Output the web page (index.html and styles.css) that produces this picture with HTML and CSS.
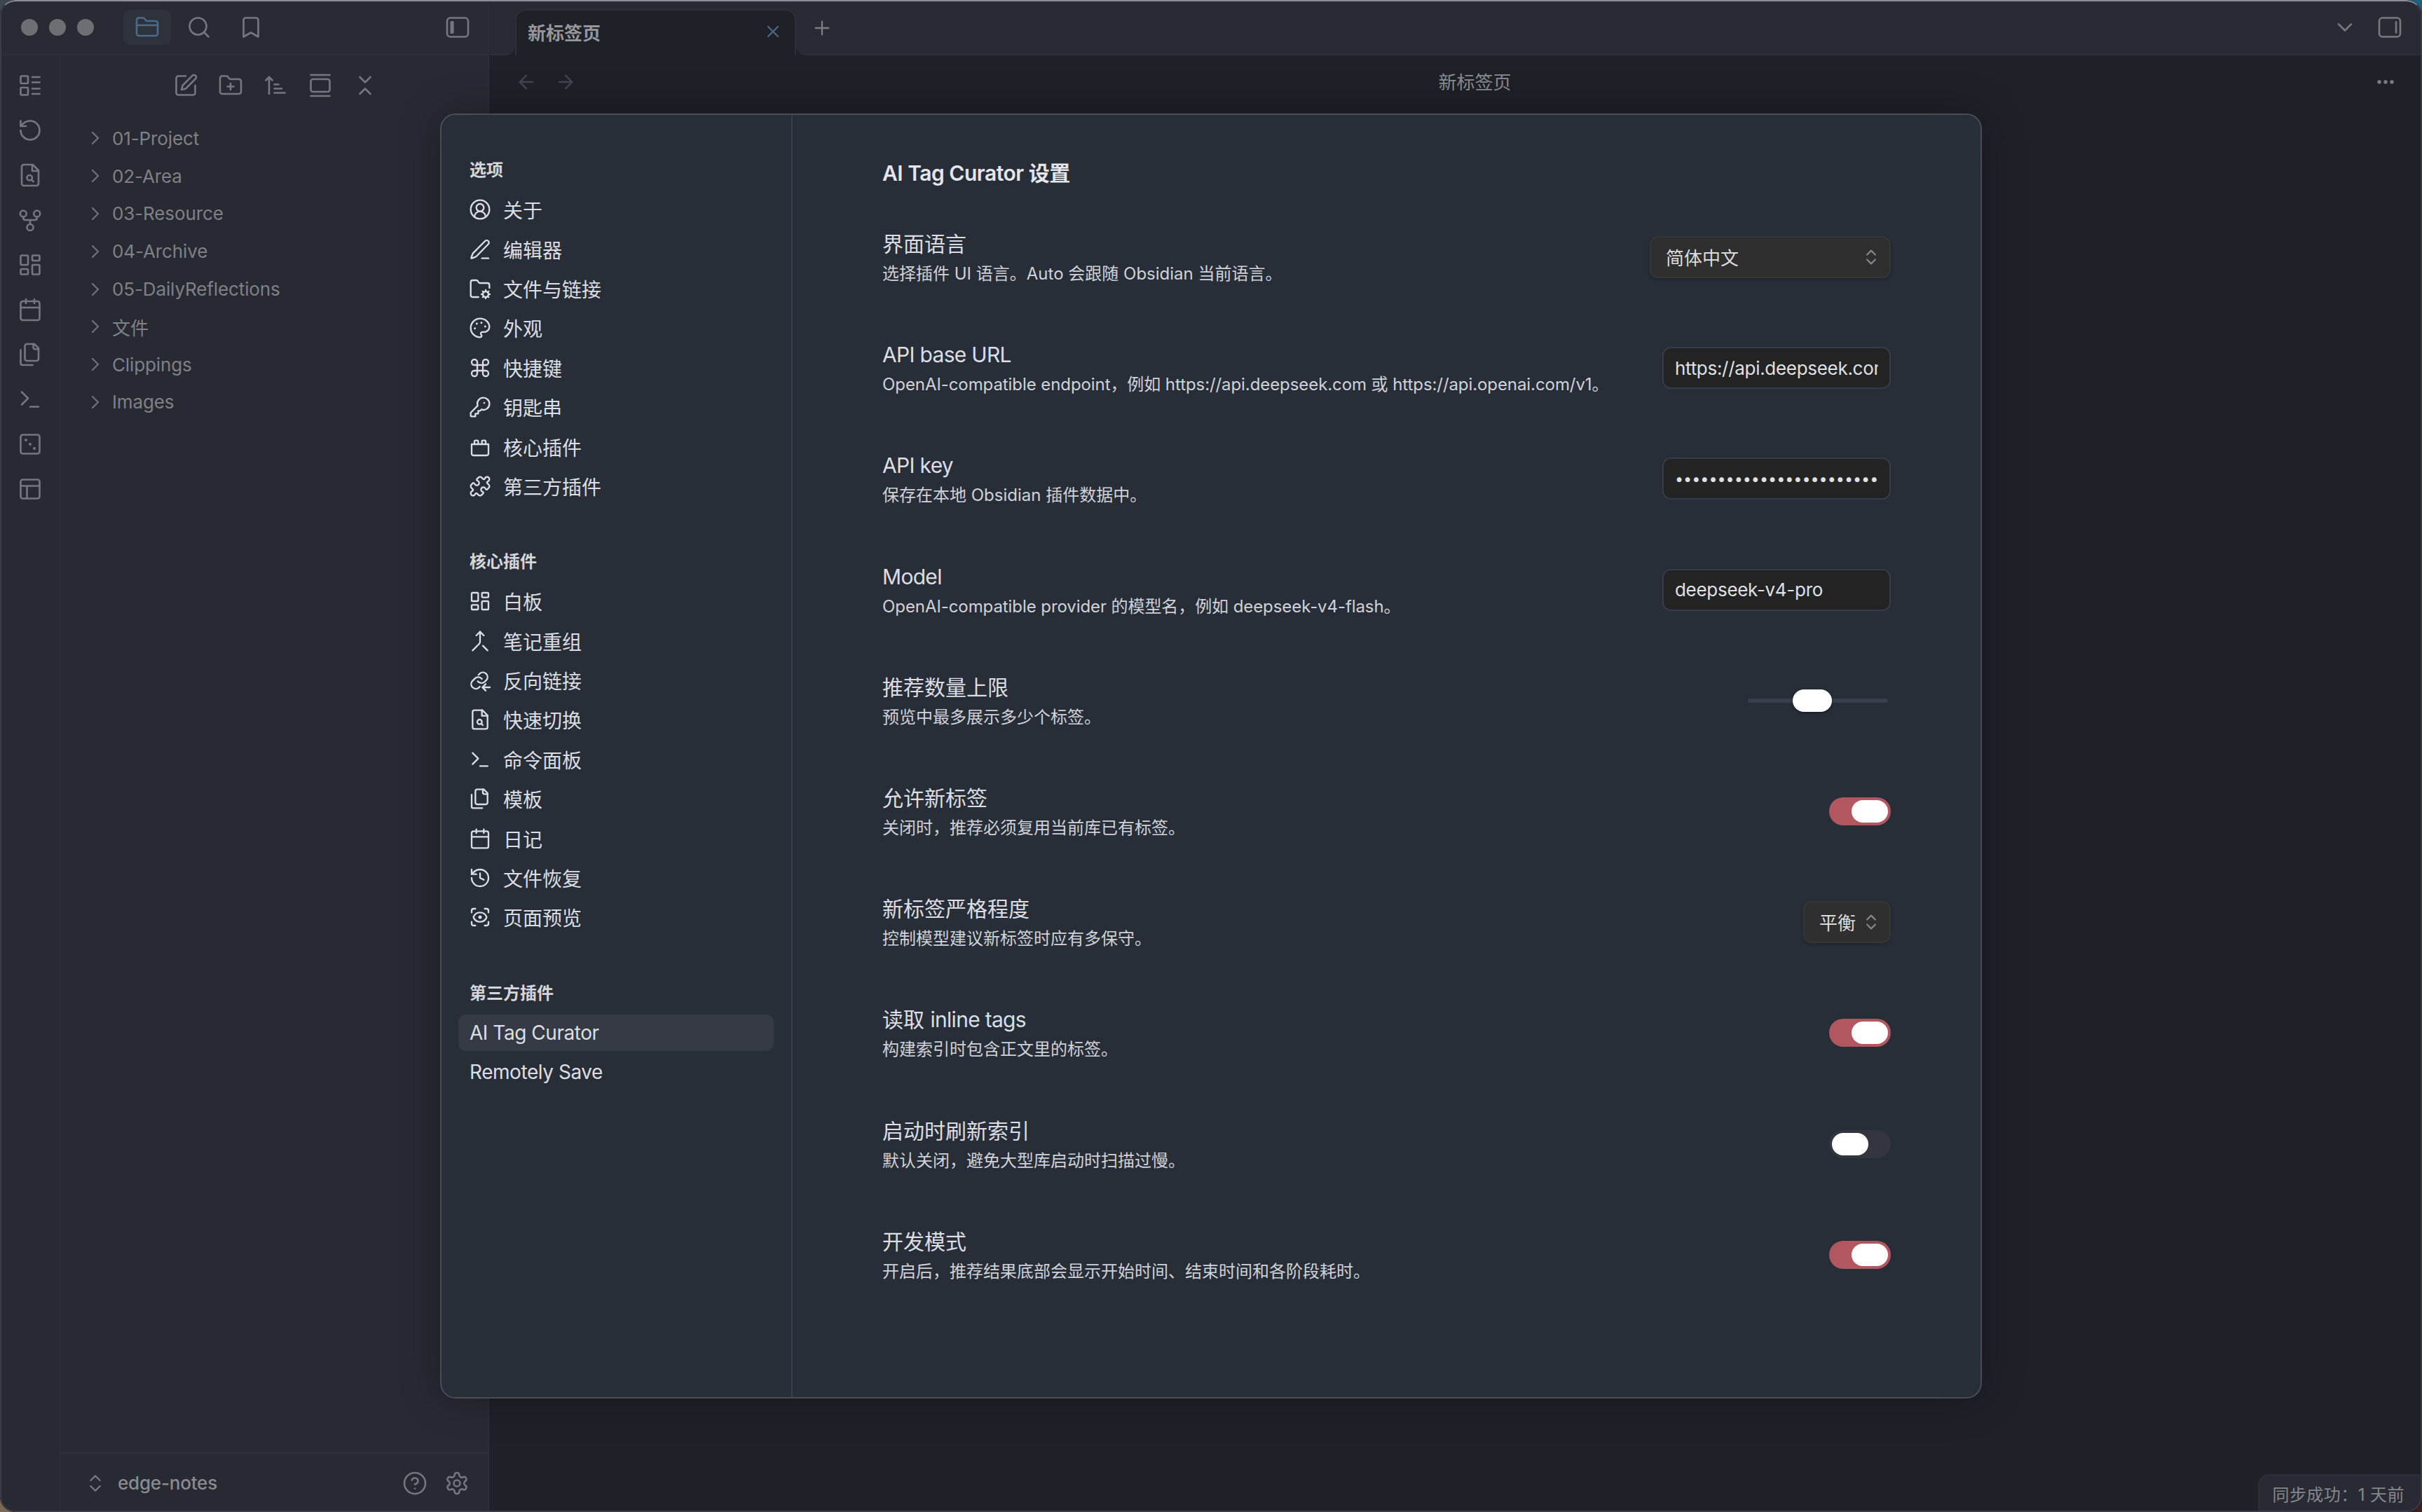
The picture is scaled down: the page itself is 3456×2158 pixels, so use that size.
FILE: index.html
```html
<!DOCTYPE html>
<html lang="zh-CN">
<head>
<meta charset="utf-8">
<title>AI Tag Curator 设置</title>
<link rel="stylesheet" href="styles.css">
</head>
<body>
<svg class="sprite" aria-hidden="true">
  <symbol id="i-folder-closed" viewBox="0 0 24 24"><path d="M20 20a2 2 0 0 0 2-2V8a2 2 0 0 0-2-2h-7.9a2 2 0 0 1-1.69-.9L9.6 3.9A2 2 0 0 0 7.93 3H4a2 2 0 0 0-2 2v13a2 2 0 0 0 2 2Z"/><path d="M2 10h20"/></symbol>
  <symbol id="i-search" viewBox="0 0 24 24"><circle cx="11" cy="11" r="8"/><path d="m21 21-4.3-4.3"/></symbol>
  <symbol id="i-bookmark" viewBox="0 0 24 24"><path d="m19 21-7-4-7 4V5a2 2 0 0 1 2-2h10a2 2 0 0 1 2 2v16z"/></symbol>
  <symbol id="i-side-left" viewBox="0 0 24 24"><rect x="2" y="3" width="20" height="18" rx="3"/><rect class="solid" x="5" y="6" width="3.4" height="12" rx="1"/></symbol>
  <symbol id="i-side-right" viewBox="0 0 24 24"><rect x="2" y="3" width="20" height="18" rx="3"/><path d="M18 7v10"/></symbol>
  <symbol id="i-layout-list" viewBox="0 0 24 24"><rect x="3" y="3" width="7" height="7" rx="1"/><rect x="3" y="14" width="7" height="7" rx="1"/><path d="M14 4h7M14 9h7M14 15h7M14 20h7"/></symbol>
  <symbol id="i-rotate" viewBox="0 0 24 24"><path d="M3 12a9 9 0 1 0 9-9 9.75 9.75 0 0 0-6.74 2.74L3 8"/><path d="M3 3v5h5"/></symbol>
  <symbol id="i-file-search" viewBox="0 0 24 24"><path d="M14.5 2H6a2 2 0 0 0-2 2v16a2 2 0 0 0 2 2h12a2 2 0 0 0 2-2V7.5L14.5 2z"/><path d="M14 2v6h6"/><circle cx="11.5" cy="14.5" r="2.5"/><path d="M13.3 16.3 15 18"/></symbol>
  <symbol id="i-fork" viewBox="0 0 24 24"><circle cx="12" cy="19" r="3"/><circle cx="5.5" cy="6" r="3"/><circle cx="18.5" cy="6" r="3"/><path d="M18.5 9v1c0 1.2-.8 2-2 2h-9c-1.200 0-2-.8-2-2V9"/><path d="M12 12v4"/></symbol>
  <symbol id="i-dashboard" viewBox="0 0 24 24"><rect x="3" y="3" width="7" height="9" rx="1"/><rect x="14" y="3" width="7" height="5" rx="1"/><rect x="14" y="12" width="7" height="9" rx="1"/><rect x="3" y="16" width="7" height="5" rx="1"/></symbol>
  <symbol id="i-calendar" viewBox="0 0 24 24"><rect x="3" y="4" width="18" height="18" rx="2"/><path d="M16 2v4M8 2v4M3 10h18"/></symbol>
  <symbol id="i-files" viewBox="0 0 24 24"><path d="M20 7h-3a2 2 0 0 1-2-2V2"/><path d="M9 18a2 2 0 0 1-2-2V4a2 2 0 0 1 2-2h7l4 4v10a2 2 0 0 1-2 2Z"/><path d="M3 7.600v12.800A1.600 1.600 0 0 0 4.600 22h9.800"/></symbol>
  <symbol id="i-terminal" viewBox="0 0 24 24"><path d="m4 17 6-6-6-6"/><path d="M12 19h8"/></symbol>
  <symbol id="i-dice" viewBox="0 0 24 24"><rect x="3" y="3" width="18" height="18" rx="2"/><circle class="solid" cx="8" cy="8" r="1.300"/><circle class="solid" cx="12" cy="12" r="1.300"/><circle class="solid" cx="16" cy="16" r="1.300"/></symbol>
  <symbol id="i-template" viewBox="0 0 24 24"><rect x="3" y="3" width="18" height="18" rx="2"/><path d="M3 9h18M9 21V9"/></symbol>
  <symbol id="i-edit" viewBox="0 0 24 24"><path d="M12 3H5a2 2 0 0 0-2 2v14a2 2 0 0 0 2 2h14a2 2 0 0 0 2-2v-7"/><path d="M18.375 2.625a2.121 2.121 0 1 1 3 3L12 15l-4 1 1-4Z"/></symbol>
  <symbol id="i-folder-plus" viewBox="0 0 24 24"><path d="M20 20a2 2 0 0 0 2-2V8a2 2 0 0 0-2-2h-7.9a2 2 0 0 1-1.69-.9L9.6 3.9A2 2 0 0 0 7.93 3H4a2 2 0 0 0-2 2v13a2 2 0 0 0 2 2Z"/><path d="M12 10v6M9 13h6"/></symbol>
  <symbol id="i-sort" viewBox="0 0 24 24"><path d="M11 11h4M11 15h7M11 19h10M9 7 6 4 3 7M6 6v14"/></symbol>
  <symbol id="i-gallery" viewBox="0 0 24 24"><path d="M3 2h18"/><rect x="3" y="6" width="18" height="12" rx="2"/><path d="M3 22h18"/></symbol>
  <symbol id="i-collapse" viewBox="0 0 24 24"><path d="m7 20 5-5 5 5M7 4l5 5 5-5"/></symbol>
  <symbol id="i-chev-right" viewBox="0 0 24 24"><path d="m9 18 6-6-6-6"/></symbol>
  <symbol id="i-chev-down" viewBox="0 0 24 24"><path d="m6 9 6 6 6-6"/></symbol>
  <symbol id="i-updown" viewBox="0 0 24 24"><path d="m7 15 5 5 5-5M7 9l5-5 5 5"/></symbol>
  <symbol id="i-x" viewBox="0 0 24 24"><path d="M18 6 6 18M6 6l12 12"/></symbol>
  <symbol id="i-plus" viewBox="0 0 24 24"><path d="M5 12h14M12 5v14"/></symbol>
  <symbol id="i-back" viewBox="0 0 24 24"><path d="M19 12H5M12 19l-7-7 7-7"/></symbol>
  <symbol id="i-forward" viewBox="0 0 24 24"><path d="M5 12h14M12 5l7 7-7 7"/></symbol>
  <symbol id="i-more" viewBox="0 0 24 24"><circle class="solid" cx="6" cy="12" r="1.800"/><circle class="solid" cx="12" cy="12" r="1.800"/><circle class="solid" cx="18" cy="12" r="1.800"/></symbol>
  <symbol id="i-help" viewBox="0 0 24 24"><circle cx="12" cy="12" r="10"/><path d="M9.090 9a3 3 0 0 1 5.830 1c0 2-3 3-3 3M12 17h.01"/></symbol>
  <symbol id="i-gear" viewBox="0 0 24 24"><path d="M12.220 2h-.44a2 2 0 0 0-2 2v.18a2 2 0 0 1-1 1.730l-.43.25a2 2 0 0 1-2 0l-.15-.08a2 2 0 0 0-2.730.73l-.22.38a2 2 0 0 0 .73 2.730l.15.1a2 2 0 0 1 1 1.720v.51a2 2 0 0 1-1 1.740l-.15.09a2 2 0 0 0-.73 2.730l.22.38a2 2 0 0 0 2.730.73l.15-.08a2 2 0 0 1 2 0l.43.25a2 2 0 0 1 1 1.730V20a2 2 0 0 0 2 2h.44a2 2 0 0 0 2-2v-.18a2 2 0 0 1 1-1.730l.43-.25a2 2 0 0 1 2 0l.15.08a2 2 0 0 0 2.730-.73l.22-.39a2 2 0 0 0-.73-2.730l-.15-.08a2 2 0 0 1-1-1.740v-.5a2 2 0 0 1 1-1.740l.15-.09a2 2 0 0 0 .73-2.730l-.22-.38a2 2 0 0 0-2.730-.73l-.15.08a2 2 0 0 1-2 0l-.43-.25a2 2 0 0 1-1-1.730V4a2 2 0 0 0-2-2z"/><circle cx="12" cy="12" r="3"/></symbol>
  <symbol id="i-user" viewBox="0 0 24 24"><path d="M18 20a6 6 0 0 0-12 0"/><circle cx="12" cy="10" r="4"/><circle cx="12" cy="12" r="10"/></symbol>
  <symbol id="i-pencil" viewBox="0 0 24 24"><path d="M14 21.500h7"/><path d="M17.400 3a2.100 2.100 0 0 1 3.400 3.400L8 19.500a2 2 0 0 1-.9.500l-3.800 1.400a.5.5 0 0 1-.7-.7l1.400-3.800a2 2 0 0 1 .5-.9z"/></symbol>
  <symbol id="i-folder-cog" viewBox="0 0 24 24"><path d="M10.300 21H4a2 2 0 0 1-2-2V5a2 2 0 0 1 2-2h3.980a2 2 0 0 1 1.690.9l.66 1.200A2 2 0 0 0 12 6h8a2 2 0 0 1 2 2v3.300"/><circle cx="18" cy="18" r="3"/><path d="M18 13.500V15M18 21v1.500M13.500 18H15M21 18h1.500M14.800 14.800l1.100 1.100M20.100 20.100l1.100 1.100M14.800 21.200l1.100-1.100M20.100 15.900l1.100-1.100"/></symbol>
  <symbol id="i-palette" viewBox="0 0 24 24"><circle class="solid" cx="13.500" cy="6.500" r="1.100"/><circle class="solid" cx="17.500" cy="10.500" r="1.100"/><circle class="solid" cx="8.500" cy="7.500" r="1.100"/><circle class="solid" cx="6.500" cy="12.500" r="1.100"/><path d="M12 2C6.500 2 2 6.500 2 12s4.500 10 10 10c.926 0 1.648-.746 1.648-1.688 0-.437-.18-.835-.437-1.125-.29-.289-.438-.652-.438-1.125a1.640 1.640 0 0 1 1.668-1.668h1.996c3.051 0 5.555-2.503 5.555-5.554C21.965 6.012 17.461 2 12 2z"/></symbol>
  <symbol id="i-command" viewBox="0 0 24 24"><path d="M15 6v12a3 3 0 1 0 3-3H6a3 3 0 1 0 3 3V6a3 3 0 1 0-3 3h12a3 3 0 1 0-3-3"/></symbol>
  <symbol id="i-key" viewBox="0 0 24 24"><path d="M2 18v3c0 .6.4 1 1 1h4v-3h3v-3h2l1.400-1.400a6.500 6.500 0 1 0-4-4Z"/><circle class="solid" cx="16.500" cy="7.500" r="1"/></symbol>
  <symbol id="i-lego" viewBox="0 0 24 24"><path d="M3 9h18v10a2 2 0 0 1-2 2H5a2 2 0 0 1-2-2Z"/><path d="M6 9V6a1 1 0 0 1 1-1h2a1 1 0 0 1 1 1v3M14 9V6a1 1 0 0 1 1-1h2a1 1 0 0 1 1 1v3"/></symbol>
  <symbol id="i-puzzle" viewBox="0 0 24 24"><path d="M19.439 7.850c-.049.322.059.648.289.878l1.568 1.568c.47.47.706 1.087.706 1.704s-.235 1.233-.706 1.704l-1.611 1.611a.98.98 0 0 1-.837.276c-.47-.07-.802-.48-.968-.925a2.501 2.501 0 1 0-3.214 3.214c.446.166.855.497.925.968a.979.979 0 0 1-.276.837l-1.610 1.610a2.404 2.404 0 0 1-1.705.707 2.402 2.402 0 0 1-1.704-.706l-1.568-1.568a1.026 1.026 0 0 0-.877-.29c-.493.074-.84.504-1.020.968a2.500 2.500 0 1 1-3.237-3.237c.464-.18.894-.527.967-1.020a1.026 1.026 0 0 0-.289-.877l-1.568-1.568A2.402 2.402 0 0 1 1.998 12c0-.617.236-1.234.706-1.704L4.230 8.770c.24-.24.581-.353.917-.303.515.077.877.528 1.073 1.010a2.500 2.500 0 1 0 3.259-3.259c-.482-.196-.933-.558-1.010-1.073-.05-.336.062-.676.303-.917l1.525-1.525A2.402 2.402 0 0 1 12 1.998c.617 0 1.234.236 1.704.706l1.568 1.568c.23.23.556.338.877.29.493-.074.84-.504 1.020-.968a2.500 2.500 0 1 1 3.237 3.237c-.464.18-.894.527-.967 1.020Z"/></symbol>
  <symbol id="i-merge" viewBox="0 0 24 24"><path d="m8 6 4-4 4 4"/><path d="M12 2v10.300a4 4 0 0 1-1.172 2.872L4 22"/><path d="m20 22-5-5"/></symbol>
  <symbol id="i-backlink" viewBox="0 0 24 24"><path d="M9.500 13a5 5 0 0 0 7.500.5l2-2a5 5 0 0 0-7-7l-1.700 1.700"/><path d="M14 10.500a5 5 0 0 0-7.500-.5l-3 3a5 5 0 0 0 7 7l1.200-1.200"/><path d="M22.500 19.500H14.500M18 16l-3.500 3.500L18 23"/></symbol>
  <symbol id="i-history" viewBox="0 0 24 24"><path d="M3 12a9 9 0 1 0 9-9 9.750 9.750 0 0 0-6.740 2.740L3 8"/><path d="M3 3v5h5"/><path d="M12 7v5l4 2"/></symbol>
  <symbol id="i-scan-eye" viewBox="0 0 24 24"><path d="M3 7V5a2 2 0 0 1 2-2h2M17 3h2a2 2 0 0 1 2 2v2M21 17v2a2 2 0 0 1-2 2h-2M7 21H5a2 2 0 0 1-2-2v-2"/><circle cx="12" cy="12" r="1"/><path d="M18.944 12.330a1 1 0 0 0 0-.66 7.500 7.500 0 0 0-13.888 0 1 1 0 0 0 0 .66 7.500 7.500 0 0 0 13.888 0"/></symbol>
</svg>

<div class="window">
  <div class="left-pane">
    <header class="topbar">
      <div class="traffic"><i></i><i></i><i></i></div>
      <div class="side-tabs">
        <span class="side-tab active"><svg class="ico s36"><use href="#i-folder-closed"/></svg></span>
        <span class="side-tab"><svg class="ico s36"><use href="#i-search"/></svg></span>
        <span class="side-tab"><svg class="ico s36"><use href="#i-bookmark"/></svg></span>
      </div>
      <svg class="ico s36 toggle-left"><use href="#i-side-left"/></svg>
    </header>
    <div class="left-body">
      <nav class="ribbon">
        <span class="rib"><svg class="ico s36"><use href="#i-layout-list"/></svg></span>
        <span class="rib"><svg class="ico s36"><use href="#i-rotate"/></svg></span>
        <span class="rib"><svg class="ico s36"><use href="#i-file-search"/></svg></span>
        <span class="rib"><svg class="ico s36"><use href="#i-fork"/></svg></span>
        <span class="rib"><svg class="ico s36"><use href="#i-dashboard"/></svg></span>
        <span class="rib"><svg class="ico s36"><use href="#i-calendar"/></svg></span>
        <span class="rib"><svg class="ico s36"><use href="#i-files"/></svg></span>
        <span class="rib"><svg class="ico s36"><use href="#i-terminal"/></svg></span>
        <span class="rib"><svg class="ico s36"><use href="#i-dice"/></svg></span>
        <span class="rib"><svg class="ico s36"><use href="#i-template"/></svg></span>
      </nav>
      <aside class="sidebar">
        <div class="tree-tools">
          <span class="rib"><svg class="ico s36"><use href="#i-edit"/></svg></span>
          <span class="rib"><svg class="ico s36"><use href="#i-folder-plus"/></svg></span>
          <span class="rib"><svg class="ico s36"><use href="#i-sort"/></svg></span>
          <span class="rib"><svg class="ico s36"><use href="#i-gallery"/></svg></span>
          <span class="rib"><svg class="ico s36"><use href="#i-collapse"/></svg></span>
        </div>
        <ul class="tree">
          <li><svg class="ico s32"><use href="#i-chev-right"/></svg><span>01-Project</span></li>
          <li><svg class="ico s32"><use href="#i-chev-right"/></svg><span>02-Area</span></li>
          <li><svg class="ico s32"><use href="#i-chev-right"/></svg><span>03-Resource</span></li>
          <li><svg class="ico s32"><use href="#i-chev-right"/></svg><span>04-Archive</span></li>
          <li><svg class="ico s32"><use href="#i-chev-right"/></svg><span>05-DailyReflections</span></li>
          <li><svg class="ico s32"><use href="#i-chev-right"/></svg><span>文件</span></li>
          <li><svg class="ico s32"><use href="#i-chev-right"/></svg><span>Clippings</span></li>
          <li><svg class="ico s32"><use href="#i-chev-right"/></svg><span>Images</span></li>
        </ul>
        <footer class="vault">
          <svg class="ico s32"><use href="#i-updown"/></svg>
          <span class="vault-name">edge-notes</span>
          <span class="vault-btn"><svg class="ico s36"><use href="#i-help"/></svg></span>
          <span class="vault-btn"><svg class="ico s36"><use href="#i-gear"/></svg></span>
        </footer>
      </aside>
    </div>
  </div>

  <main class="right-pane">
    <header class="tabbar">
      <div class="tab">
        <span class="tab-title">新标签页</span>
        <svg class="ico s28 tab-close"><use href="#i-x"/></svg>
      </div>
      <svg class="ico s32 tab-plus"><use href="#i-plus"/></svg>
      <svg class="ico s36 tab-list"><use href="#i-chev-down"/></svg>
      <svg class="ico s36 toggle-right"><use href="#i-side-right"/></svg>
    </header>
    <div class="view-head">
      <svg class="ico s32 arrow"><use href="#i-back"/></svg>
      <svg class="ico s32 arrow arrow-next"><use href="#i-forward"/></svg>
      <span class="view-title">新标签页</span>
      <svg class="ico s36 more"><use href="#i-more"/></svg>
    </div>
    <div class="status">同步成功：1 天前</div>
  </main>

  <section class="modal">
    <aside class="modal-side">
      <h3 class="group-title">选项</h3>
      <a class="nav"><svg class="ico s32"><use href="#i-user"/></svg><span>关于</span></a>
      <a class="nav"><svg class="ico s32"><use href="#i-pencil"/></svg><span>编辑器</span></a>
      <a class="nav"><svg class="ico s32"><use href="#i-folder-cog"/></svg><span>文件与链接</span></a>
      <a class="nav"><svg class="ico s32"><use href="#i-palette"/></svg><span>外观</span></a>
      <a class="nav"><svg class="ico s32"><use href="#i-command"/></svg><span>快捷键</span></a>
      <a class="nav"><svg class="ico s32"><use href="#i-key"/></svg><span>钥匙串</span></a>
      <a class="nav"><svg class="ico s32"><use href="#i-lego"/></svg><span>核心插件</span></a>
      <a class="nav"><svg class="ico s32"><use href="#i-puzzle"/></svg><span>第三方插件</span></a>

      <h3 class="group-title gap">核心插件</h3>
      <a class="nav"><svg class="ico s32"><use href="#i-dashboard"/></svg><span>白板</span></a>
      <a class="nav"><svg class="ico s32"><use href="#i-merge"/></svg><span>笔记重组</span></a>
      <a class="nav"><svg class="ico s32"><use href="#i-backlink"/></svg><span>反向链接</span></a>
      <a class="nav"><svg class="ico s32"><use href="#i-file-search"/></svg><span>快速切换</span></a>
      <a class="nav"><svg class="ico s32"><use href="#i-terminal"/></svg><span>命令面板</span></a>
      <a class="nav"><svg class="ico s32"><use href="#i-files"/></svg><span>模板</span></a>
      <a class="nav"><svg class="ico s32"><use href="#i-calendar"/></svg><span>日记</span></a>
      <a class="nav"><svg class="ico s32"><use href="#i-history"/></svg><span>文件恢复</span></a>
      <a class="nav"><svg class="ico s32"><use href="#i-scan-eye"/></svg><span>页面预览</span></a>

      <h3 class="group-title gap">第三方插件</h3>
      <a class="nav plain active"><span>AI Tag Curator</span></a>
      <a class="nav plain"><span>Remotely Save</span></a>
    </aside>

    <div class="modal-main">
      <h2 class="settings-title">AI Tag Curator 设置</h2>

      <div class="row">
        <div class="info"><div class="name">界面语言</div><div class="desc">选择插件 UI 语言。Auto 会跟随 Obsidian 当前语言。</div></div>
        <div class="select wide"><span>简体中文</span><svg class="ico s28"><use href="#i-updown"/></svg></div>
      </div>
      <div class="row">
        <div class="info"><div class="name latin">API base URL</div><div class="desc tight">OpenAI-compatible endpoint，例如 https://api.deepseek.com 或 https://api.openai.com/v1。</div></div>
        <div class="input"><span>https://api.deepseek.com</span></div>
      </div>
      <div class="row">
        <div class="info"><div class="name latin">API key</div><div class="desc">保存在本地 Obsidian 插件数据中。</div></div>
        <div class="input secret"><span>••••••••••••••••••••••••</span></div>
      </div>
      <div class="row">
        <div class="info"><div class="name latin">Model</div><div class="desc tight">OpenAI-compatible provider 的模型名，例如 deepseek-v4-flash。</div></div>
        <div class="input"><span>deepseek-v4-pro</span></div>
      </div>
      <div class="row">
        <div class="info"><div class="name">推荐数量上限</div><div class="desc">预览中最多展示多少个标签。</div></div>
        <div class="slider"><i class="slider-thumb"></i></div>
      </div>
      <div class="row">
        <div class="info"><div class="name">允许新标签</div><div class="desc">关闭时，推荐必须复用当前库已有标签。</div></div>
        <div class="switch on"><i></i></div>
      </div>
      <div class="row">
        <div class="info"><div class="name">新标签严格程度</div><div class="desc">控制模型建议新标签时应有多保守。</div></div>
        <div class="select"><span>平衡</span><svg class="ico s28"><use href="#i-updown"/></svg></div>
      </div>
      <div class="row">
        <div class="info"><div class="name">读取 <span class="latin">inline tags</span></div><div class="desc">构建索引时包含正文里的标签。</div></div>
        <div class="switch on"><i></i></div>
      </div>
      <div class="row">
        <div class="info"><div class="name">启动时刷新索引</div><div class="desc">默认关闭，避免大型库启动时扫描过慢。</div></div>
        <div class="switch"><i></i></div>
      </div>
      <div class="row">
        <div class="info"><div class="name">开发模式</div><div class="desc">开启后，推荐结果底部会显示开始时间、结束时间和各阶段耗时。</div></div>
        <div class="switch on"><i></i></div>
      </div>
    </div>
  </section>
</div>
</body>
</html>
```

FILE: styles.css
```css
* { box-sizing: border-box; }
html, body { margin: 0; height: 100%; }
body {
  width: 3456px;
  height: 2158px;
  overflow: hidden;
  font-family: Inter, "Noto Sans CJK SC", sans-serif;
  background:
    radial-gradient(circle at 100% 0, #1f5f80 0, #1f5f80 40px, transparent 60px),
    radial-gradient(circle at 0 100%, #7a6a55 0, #7a6a55 40px, transparent 60px),
    radial-gradient(circle at 100% 100%, #3c1f1f 0, #3c1f1f 40px, transparent 60px),
    #3d4750;
}
.sprite { position: absolute; width: 0; height: 0; }
.ico {
  fill: none;
  stroke: currentColor;
  stroke-width: 1.75;
  stroke-linecap: round;
  stroke-linejoin: round;
  flex: none;
  display: block;
}
.solid { fill: currentColor; stroke: none; }
.s36 { width: 36px; height: 36px; }
.s32 { width: 32px; height: 32px; }
.s28 { width: 28px; height: 28px; }

.window {
  position: relative;
  display: flex;
  width: 3456px;
  height: 2158px;
  border-radius: 22px;
  overflow: hidden;
  background: #1e2128;
}
.window::after {
  content: "";
  position: absolute;
  inset: 0;
  border-radius: 22px;
  border: 2px solid #3a3d45;
  border-top-color: #8d9097;
  pointer-events: none;
  z-index: 5;
}

/* left pane */
.left-pane {
  display: flex;
  flex-direction: column;
  width: 698px;
  flex: none;
  background: #272a32;
  border-right: 2px solid #2b2e37;
  color: #75777e;
}
.topbar {
  display: flex;
  align-items: center;
  height: 79px;
  flex: none;
  padding: 0 25px 0 30px;
  background: #282b33;
  border-bottom: 2px solid #2d303a;
}
.traffic { display: flex; gap: 16px; }
.traffic i { width: 24px; height: 24px; border-radius: 50%; background: #6e6f73; }
.side-tabs { display: flex; gap: 6px; margin-left: 42px; }
.side-tab {
  display: flex;
  align-items: center;
  justify-content: center;
  width: 68px;
  height: 50px;
  border-radius: 10px;
}
.side-tab.active { background: #2e323b; color: #4a6b8c; }
.toggle-left { margin-left: auto; }
.left-body { display: flex; flex: 1; min-height: 0; }
.ribbon {
  display: flex;
  flex-direction: column;
  align-items: center;
  width: 87px;
  flex: none;
  padding-top: 11px;
  border-right: 2px solid #2b2e37;
}
.rib {
  display: flex;
  align-items: center;
  justify-content: center;
  width: 64px;
  height: 64px;
  flex: none;
}
.sidebar { display: flex; flex-direction: column; flex: 1; min-width: 0; }
.tree-tools {
  display: flex;
  justify-content: center;
  align-items: center;
  height: 86px;
  flex: none;
  padding-left: 3px;
}
.tree { list-style: none; margin: 0; padding: 5.5px 0 0; flex: 1; }
.tree li {
  display: flex;
  align-items: center;
  height: 53.8px;
  padding-left: 33px;
  font-size: 26px;
  letter-spacing: -.12px;
  color: #7f8187;
}
.tree li span { margin-left: 8px; }
.tree li .ico { color: #6f7177; }
.vault {
  display: flex;
  align-items: center;
  height: 85px;
  flex: none;
  padding: 0 14px 0 33px;
  border-top: 2px solid #2d303a;
}
.vault-name { margin-left: 16px; margin-right: auto; font-size: 26px; font-weight: 500; letter-spacing: -.2px; color: #8a8b90; }
.vault-btn { display: flex; align-items: center; justify-content: center; width: 60px; height: 60px; }

/* right pane */
.right-pane { position: relative; flex: 1; min-width: 0; background: #1e2128; }
.tabbar {
  display: flex;
  align-items: flex-end;
  height: 79px;
  padding: 0 28px 0 37px;
  background: #282b33;
  border-bottom: 2px solid #2d303a;
  color: #77797f;
}
.tab {
  position: relative;
  display: flex;
  align-items: center;
  justify-content: space-between;
  width: 401px;
  height: 66px;
  margin-bottom: -2px;
  padding: 0 17px 4px 16px;
  background: #1e2128;
  border: 2px solid #2d303a;
  border-bottom: 0;
  border-radius: 16px 16px 0 0;
}
.tab::before, .tab::after {
  content: "";
  position: absolute;
  bottom: 0;
  width: 16px;
  height: 16px;
}
.tab::before { left: -18px; background: radial-gradient(circle at 0 0, transparent 15px, #2d303a 15.5px, #1e2128 17px); }
.tab::after { right: -18px; background: radial-gradient(circle at 100% 0, transparent 15px, #2d303a 15.5px, #1e2128 17px); }
.tab-title { font-size: 26px; font-weight: 600; color: #96979b; }
.tab-close { color: #4f6780; stroke-width: 2; }
.tab-plus { align-self: center; margin-top: 2px; margin-left: 21px; color: #7c7e84; }
.tab-list { align-self: center; margin-left: auto; margin-right: 28px; }
.toggle-right { align-self: center; }
.view-head {
  display: flex;
  align-items: center;
  height: 76px;
  padding: 0 34px 0 37px;
}
.arrow { color: #43464e; }
.arrow-next { margin-left: 24px; }
.view-title { flex: 1; padding-bottom: 3px; text-align: center; font-size: 26px; color: #8a8c92; }
.more { color: #7b7d83; }
.status {
  position: absolute;
  right: 0;
  bottom: 0;
  display: flex;
  align-items: center;
  height: 54px;
  padding: 0 25px 2px 18px;
  background: #282b33;
  border: 2px solid #2d303a;
  border-width: 2px 0 0 2px;
  border-radius: 16px 0 0 0;
  font-size: 24px;
  letter-spacing: .45px;
  color: #85878d;
}

/* settings modal */
.modal {
  position: absolute;
  left: 628px;
  top: 162px;
  z-index: 3;
  display: flex;
  width: 2200px;
  height: 1834px;
  background: #282e38;
  border: 2px solid #4b4d54;
  border-radius: 22px;
  box-shadow: 0 0 60px rgba(0, 0, 0, .28);
  color: #dcdee4;
}
.modal-side {
  width: 501px;
  flex: none;
  padding: 61px 25px 0 24px;
  border-right: 2px solid #3a3f4d;
}
.group-title {
  height: 36px;
  margin: 0 0 12px;
  padding-left: 16px;
  font-size: 24px;
  line-height: 36px;
  font-weight: 600;
  color: #d4d6dc;
}
.group-title.gap { margin-top: 64px; }
.nav {
  display: flex;
  align-items: center;
  gap: 17px;
  height: 52.4px;
  margin-bottom: 4px;
  padding-left: 15px;
  border-radius: 10px;
  font-size: 28px;
  color: #dcdee4;
}
.nav.plain { padding-left: 16px; letter-spacing: -.45px; }
.nav.active { background: #353a45; }

.modal-main { flex: 1; min-width: 0; padding: 63px 128px 0; }
.settings-title {
  height: 40px;
  margin: 0 0 21px;
  font-size: 30px;
  line-height: 40px;
  font-weight: 600;
  letter-spacing: -.5px;
  color: #e4e6ec;
}
.row {
  display: flex;
  align-items: center;
  justify-content: space-between;
  height: 158.2px;
}
.info { padding-top: 3px; }
.name { font-size: 30px; line-height: 40px; color: #dcdee4; }
.latin { letter-spacing: -.7px; }
.desc { margin-top: 5px; font-size: 24px; line-height: 36px; color: #d0d2d9; white-space: nowrap; letter-spacing: 0; }
.desc.tight { letter-spacing: -.08px; }

.select {
  display: flex;
  align-items: center;
  justify-content: space-between;
  gap: 8px;
  height: 60px;
  padding: 0 12px 0 21px;
  background: #2f2f2f;
  border: 2px solid #363636;
  border-radius: 12px;
  box-shadow: 0 2px 4px rgba(0, 0, 0, .22);
  font-size: 26px;
  color: #dcdcdc;
}
.select span { padding-bottom: 2px; }
.select.wide { width: 344px; }
.select .ico { color: #85858a; stroke-width: 2; }
.input {
  display: flex;
  align-items: center;
  width: 326px;
  height: 60px;
  padding: 0 16px;
  background: #232323;
  border: 2px solid #363c4b;
  border-radius: 12px;
  font-size: 26px;
  letter-spacing: -.3px;
  color: #dfe1e6;
  white-space: nowrap;
  overflow: hidden;
}
.input span { display: block; width: 100%; overflow: hidden; }
.secret { font-size: 21.5px; letter-spacing: 0; }
.slider {
  position: relative;
  width: 200px;
  height: 6px;
  margin-right: 4px;
  border-radius: 3px;
  background: #3a3f50;
}
.slider-thumb {
  position: absolute;
  left: 64px;
  top: -13px;
  width: 56px;
  height: 32px;
  border-radius: 16px;
  background: #fff;
  box-shadow: 0 1px 4px rgba(0, 0, 0, .5);
}
.switch {
  display: flex;
  align-items: center;
  width: 88px;
  height: 40px;
  padding: 0 4px;
  border-radius: 20px;
  background: #33363f;
}
.switch.on { justify-content: flex-end; background: #b25660; }
.switch i {
  width: 52px;
  height: 32px;
  border-radius: 16px;
  background: #fff;
}
```
